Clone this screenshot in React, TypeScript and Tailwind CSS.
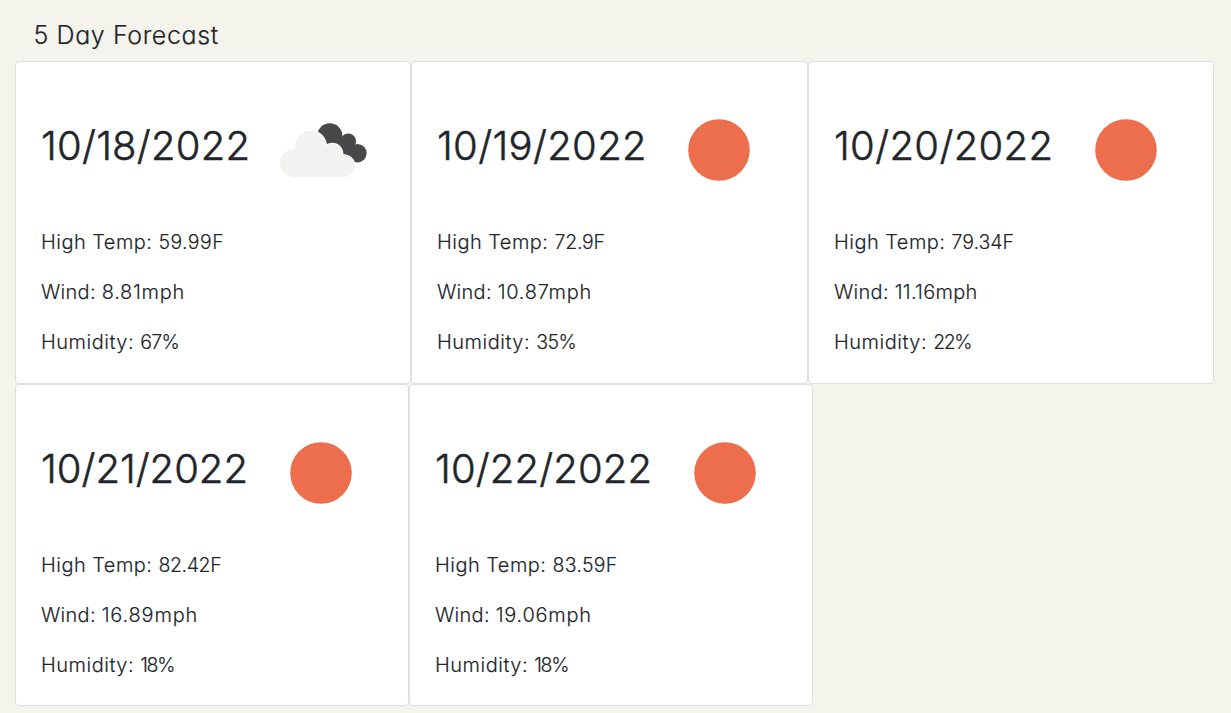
type Reading = { value: string; tracking: string };

type Day = {
  date: string;
  dateTracking: string;
  icon: "clouds" | "sun";
  temp: Reading;
  wind: Reading;
  humidity: Reading;
  width: string;
  iconInset: string;
};

const days: Day[] = [
  {
    date: "10/18/2022",
    dateTracking: "tracking-[0.25px]",
    icon: "clouds",
    temp: { value: "59.99F", tracking: "tracking-[0.4px]" },
    wind: { value: "8.81mph", tracking: "tracking-[0.7px]" },
    humidity: { value: "67%", tracking: "tracking-[-0.7px]" },
    width: "w-[396px]",
    iconInset: "pr-[38px]",
  },
  {
    date: "10/19/2022",
    dateTracking: "tracking-[0.35px]",
    icon: "sun",
    temp: { value: "72.9F", tracking: "tracking-[-0.25px]" },
    wind: { value: "10.87mph", tracking: "tracking-[0.7px]" },
    humidity: { value: "35%", tracking: "tracking-[-0.6px]" },
    width: "w-[397px]",
    iconInset: "pr-[38px]",
  },
  {
    date: "10/20/2022",
    dateTracking: "tracking-[0.35px]",
    icon: "sun",
    temp: { value: "79.34F", tracking: "tracking-[0px]" },
    wind: { value: "11.16mph", tracking: "tracking-[0.25px]" },
    humidity: { value: "22%", tracking: "tracking-[-1.4px]" },
    width: "w-[406px]",
    iconInset: "pr-[37px]",
  },
  {
    date: "10/21/2022",
    dateTracking: "tracking-[0px]",
    icon: "sun",
    temp: { value: "82.42F", tracking: "tracking-[-0.4px]" },
    wind: { value: "16.89mph", tracking: "tracking-[0.8px]" },
    humidity: { value: "18%", tracking: "tracking-[-1.3px]" },
    width: "w-[394px]",
    iconInset: "pr-[37px]",
  },
  {
    date: "10/22/2022",
    dateTracking: "tracking-[0.15px]",
    icon: "sun",
    temp: { value: "83.59F", tracking: "tracking-[0.3px]" },
    wind: { value: "19.06mph", tracking: "tracking-[0.75px]" },
    humidity: { value: "18%", tracking: "tracking-[-1.3px]" },
    width: "w-[404px]",
    iconInset: "pr-[37px]",
  },
];

function Sun() {
  return (
    <svg viewBox="0 0 100 100" className="size-[100px] shrink-0">
      <circle cx="50" cy="50" r="30.8" fill="#ec6e4c" />
    </svg>
  );
}

function Clouds() {
  return (
    <svg viewBox="0 0 100 100" className="size-[100px] shrink-0">
      <g fill="#48484a">
        <circle cx="57.8" cy="35.8" r="12.6" />
        <circle cx="76.3" cy="41.2" r="7.8" />
        <circle cx="85.3" cy="53.2" r="9.3" />
        <path d="M58 36L76 38L86 50L82 62L66 54Z" />
      </g>
      <g fill="#f2f2f0" stroke="#ffffff" strokeWidth="1.2">
        <circle cx="38.6" cy="46.3" r="15.8" />
        <circle cx="60.3" cy="53.8" r="10.4" />
        <circle cx="71.6" cy="66.2" r="11.4" />
      </g>
      <g fill="#f2f2f0">
        <circle cx="22" cy="63.2" r="13.9" />
        <circle cx="38.6" cy="46.3" r="15.2" />
        <circle cx="60.3" cy="53.8" r="9.8" />
        <circle cx="71.6" cy="66.2" r="10.8" />
        <path d="M22 54L38 44L60 52L71.6 62V77H22Z" />
      </g>
      <path d="M10 77H90V80H10Z" fill="#ffffff" />
    </svg>
  );
}

function Card({ day }: { day: Day }) {
  return (
    <article className={`${day.width} shrink-0 rounded border border-[#dfdfdf] bg-white pl-[25px]`}>
      <header className={`${day.iconInset} flex h-[154px] items-start pt-[38px]`}>
        <h2
          className={`${day.dateTracking} mt-[21px] text-[40px] leading-[50px] font-light whitespace-nowrap [-webkit-text-stroke:0.5px_#212529]`}
        >
          {day.date}
        </h2>
        <div className="ml-auto">{day.icon === "sun" ? <Sun /> : <Clouds />}</div>
      </header>
      <div className="flex flex-col gap-5 pt-[11px] text-[20px] leading-[30px] font-light [-webkit-text-stroke:0.15px_#212529]">
        <p>
          <span className="tracking-[0.46px]">High Temp: </span>
          <span className={`${day.temp.tracking} text-[19.5px]`}>{day.temp.value}</span>
        </p>
        <p>
          <span className="tracking-[0.27px]">Wind: </span>
          <span className={day.wind.tracking}>{day.wind.value}</span>
        </p>
        <p>
          <span className="tracking-[0.5px]">Humidity: </span>
          <span className={`${day.humidity.tracking} text-[19.5px]`}>{day.humidity.value}</span>
        </p>
      </div>
    </article>
  );
}

export default function App() {
  return (
    <main className="h-[713px] overflow-hidden bg-[#f4f3ec] pl-[15px] font-['Inter',sans-serif] text-[#212529] [font-feature-settings:'cv11']">
      <h1 className="h-[61px] pt-[20px] pl-[18.5px] text-[25px] leading-[30px] font-light tracking-[0.6px] [-webkit-text-stroke:0.2px_#212529]">
        5 Day Forecast
      </h1>
      <section className="flex h-[323px]">
        {days.slice(0, 3).map((day) => (
          <Card key={day.date} day={day} />
        ))}
      </section>
      <section className="flex h-[322px]">
        {days.slice(3).map((day) => (
          <Card key={day.date} day={day} />
        ))}
      </section>
    </main>
  );
}
